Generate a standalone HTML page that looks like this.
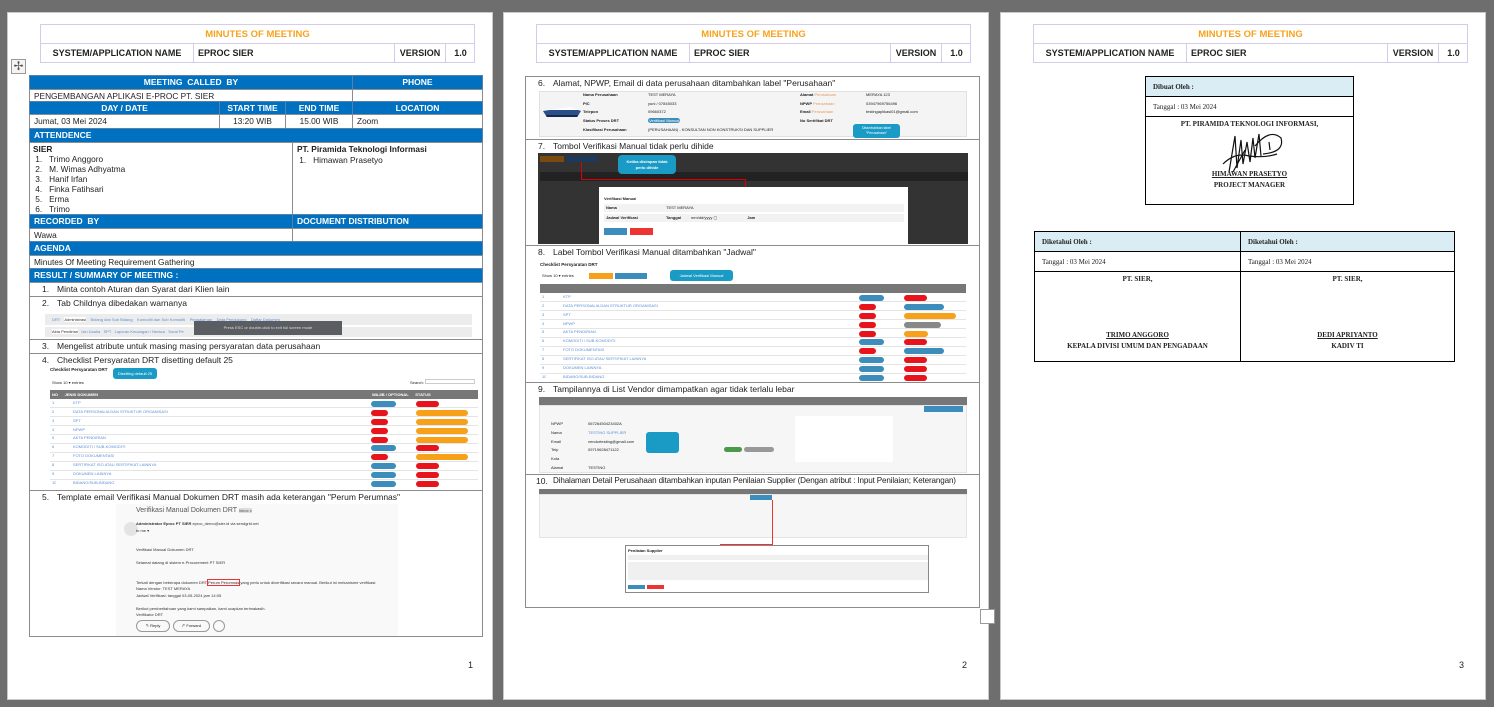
<!DOCTYPE html>
<html><head><meta charset="utf-8">
<style>
*{margin:0;padding:0;box-sizing:border-box}
body{width:1494px;height:707px;background:#6e6e6e;position:relative;overflow:hidden;font-family:"Liberation Sans",sans-serif;color:#222}
.pg{position:absolute;top:12px;width:486px;height:688px;background:#fff;border:1px solid #c8c8c8}
.a{position:absolute}
.hd{position:absolute;left:32px;top:11px;width:435px;height:39px;border:1px solid #d4cdea}
.hd .t{position:absolute;left:0;top:0;width:100%;height:19px;border-bottom:1px solid #d4cdea;text-align:center;color:#f7a21b;font-weight:bold;font-size:9.5px;line-height:19px}
.hd .c{position:absolute;top:19px;height:19px;line-height:19px;font-size:9px;font-weight:bold;border-right:1px solid #d4cdea}
.blue{position:absolute;background:#0070c0;color:#fff;font-weight:bold;font-size:8.5px;line-height:13px;border:1px solid #5a7fa8}
.cell{position:absolute;font-size:8.3px;line-height:12px;border:1px solid #8c8c8c;background:#fff}
.itm{position:absolute;border:1px solid #8c8c8c;font-size:8.5px;background:#fff}
.itm .n{position:absolute;left:12px;top:1px}
.itm .tx{position:absolute;left:27px;top:1px;white-space:nowrap}
.tiny{font-size:4px;line-height:9px;white-space:nowrap;overflow:hidden}
.bd{position:absolute;height:6px;border-radius:3px}
.r{background:#e8141b}.o{background:#f7a11a}.b{background:#3c8dbc}.g{background:#888}
.pn{position:absolute;font-size:9px}
table.s{border-collapse:collapse;position:absolute}
table.s td{border:1px solid #000;font-family:"Liberation Serif",serif;font-size:7px;padding:0 7px;height:20px}
.sh{background:#daedf4;font-weight:bold}
.cen{text-align:center;font-weight:bold}
</style></head><body>

<!-- PAGE 1 -->
<div class="pg" style="left:7px">
 <div class="hd"><div class="t">MINUTES OF MEETING</div>
  <div class="c" style="left:0;width:153px;text-align:center">SYSTEM/APPLICATION NAME</div>
  <div class="c" style="left:153px;width:201px;padding-left:4px">EPROC SIER</div>
  <div class="c" style="left:354px;width:51px;text-align:center">VERSION</div>
  <div class="c" style="left:405px;width:29px;text-align:center;border:none">1.0</div></div>
 <div class="a" style="left:3px;top:46px;width:15px;height:15px;border:1px solid #999;background:#f4f4f4;font-size:12px;line-height:12px;text-align:center;color:#555">✢</div>

 <div class="blue" style="left:21px;top:62px;width:324px;height:15px;text-align:center">MEETING&nbsp; CALLED&nbsp; BY</div>
 <div class="blue" style="left:344px;top:62px;width:131px;height:15px;text-align:center">PHONE</div>
 <div class="cell" style="left:21px;top:76px;width:324px;height:13px;padding-left:4px">PENGEMBANGAN APLIKASI E-PROC PT. SIER</div>
 <div class="cell" style="left:344px;top:76px;width:131px;height:13px"></div>
 <div class="blue" style="left:21px;top:88px;width:191px;height:14px;text-align:center">DAY / DATE</div>
 <div class="blue" style="left:211px;top:88px;width:67px;height:14px;text-align:center">START TIME</div>
 <div class="blue" style="left:277px;top:88px;width:68px;height:14px;text-align:center">END TIME</div>
 <div class="blue" style="left:344px;top:88px;width:131px;height:14px;text-align:center">LOCATION</div>
 <div class="cell" style="left:21px;top:101px;width:191px;height:15px;padding-left:4px;line-height:13px">Jumat, 03 Mei 2024</div>
 <div class="cell" style="left:211px;top:101px;width:67px;height:15px;text-align:center;line-height:13px">13:20 WIB</div>
 <div class="cell" style="left:277px;top:101px;width:68px;height:15px;text-align:center;line-height:13px">15.00 WIB</div>
 <div class="cell" style="left:344px;top:101px;width:131px;height:15px;padding-left:4px;line-height:13px">Zoom</div>
 <div class="blue" style="left:21px;top:115px;width:454px;height:15px;padding-left:4px">ATTENDENCE</div>
 <div class="cell" style="left:21px;top:129px;width:264px;height:73px;padding:1px 3px;line-height:10px"><b>SIER</b><br>&nbsp;1.&nbsp;&nbsp; Trimo Anggoro<br>&nbsp;2.&nbsp;&nbsp; M. Wimas Adhyatma<br>&nbsp;3.&nbsp;&nbsp; Hanif Irfan<br>&nbsp;4.&nbsp;&nbsp; Finka Fatihsari<br>&nbsp;5.&nbsp;&nbsp; Erma<br>&nbsp;6.&nbsp;&nbsp; Trimo</div>
 <div class="cell" style="left:284px;top:129px;width:191px;height:73px;padding:1px 4px;line-height:11px"><b>PT. Piramida Teknologi Informasi</b><br>&nbsp;1.&nbsp;&nbsp; Himawan Prasetyo</div>
 <div class="blue" style="left:21px;top:201px;width:264px;height:15px;padding-left:4px">RECORDED&nbsp; BY</div>
 <div class="blue" style="left:284px;top:201px;width:191px;height:15px;padding-left:4px">DOCUMENT DISTRIBUTION</div>
 <div class="cell" style="left:21px;top:215px;width:264px;height:14px;padding-left:4px">Wawa</div>
 <div class="cell" style="left:284px;top:215px;width:191px;height:14px"></div>
 <div class="blue" style="left:21px;top:228px;width:454px;height:15px;padding-left:4px">AGENDA</div>
 <div class="cell" style="left:21px;top:242px;width:454px;height:14px;padding-left:4px">Minutes Of Meeting Requirement Gathering</div>
 <div class="blue" style="left:21px;top:255px;width:454px;height:15px;padding-left:4px">RESULT / SUMMARY OF MEETING :</div>
 <div class="itm" style="left:21px;top:269px;width:454px;height:15px"><span class="n">1.</span><span class="tx">Minta contoh Aturan dan Syarat dari Klien lain</span></div>
 <div class="itm" style="left:21px;top:283px;width:454px;height:44px"><span class="n">2.</span><span class="tx">Tab Childnya dibedakan warnanya</span>
  <div class="a" style="left:15px;top:17px;width:427px;height:11px;background:#ececec"></div>
  <div class="a tiny" style="left:22px;top:18px;color:#5b8fd6">DRT &nbsp;&nbsp; <span style="color:#333;background:#fff">Administrasi</span> &nbsp;&nbsp; Bidang dan Sub Bidang &nbsp;&nbsp; Komoditi dan Sub Komoditi &nbsp;&nbsp; Pengalaman &nbsp;&nbsp; Data Pendukung &nbsp;&nbsp; Daftar Dokumen</div>
  <div class="a" style="left:15px;top:30px;width:427px;height:10px;background:#ececec"></div>
  <div class="a tiny" style="left:22px;top:30px;color:#5b8fd6"><span style="color:#333;background:#fff">Akta Pendirian</span> &nbsp; Izin Usaha &nbsp; SPT &nbsp; Laporan Keuangan / Neraca &nbsp; Surat Pe</div>
  <div class="a tiny" style="left:164px;top:24px;width:148px;height:14px;background:#5a5d62;color:#ddd;text-align:center;line-height:14px">Press ESC or double-click to exit full screen mode</div>
 </div>
 <div class="itm" style="left:21px;top:326px;width:454px;height:15px"><span class="n">3.</span><span class="tx">Mengelist atribute untuk masing masing persyaratan data perusahaan</span></div>
 <div class="itm" style="left:21px;top:340px;width:454px;height:138px"><span class="n">4.</span><span class="tx">Checklist Persyaratan DRT disetting default 25</span>
  <div class="a" style="left:20px;top:13px;font-size:4.5px;font-weight:bold">Checklist Persyaratan DRT</div>
  <div class="a" style="left:83px;top:14px;width:44px;height:11px;background:#1a9bc6;border-radius:3px;color:#fff;font-size:4px;line-height:11px;text-align:center">Disetting default 25</div>
  <div class="a tiny" style="left:22px;top:24px">Show 10 ▾ entries</div>
  <div class="a tiny" style="left:380px;top:24px">Search: <span style="display:inline-block;width:50px;height:5px;border:1px solid #ccc"></span></div>
  <div class="a" style="left:20px;top:36px;width:428px;height:9px;background:#777"></div>
  <div class="a tiny" style="left:22px;top:36px;color:#fff;font-weight:bold">NO &nbsp;&nbsp;&nbsp;&nbsp; JENIS DOKUMEN</div>
  <div class="a tiny" style="left:342px;top:36px;color:#fff;font-weight:bold">WAJIB / OPTIONAL &nbsp;&nbsp;&nbsp;&nbsp; STATUS</div>
  <div class="a" style="left:20px;top:45px;width:428px;height:89px;background:repeating-linear-gradient(#fff 0 8px,#e4e4e4 8px 9px)"></div>
  <div class="a tiny" style="left:22px;top:45px;line-height:8.85px;color:#5b8fd6">1<br>2<br>3<br>4<br>5<br>6<br>7<br>8<br>9<br>10</div>
  <div class="a tiny" style="left:43px;top:45px;line-height:8.85px;color:#5b8fd6">KTP<br>DATA PERSONALIA DAN STRUKTUR ORGANISASI<br>SPT<br>NPWP<br>AKTA PENDIRIAN<br>KOMODITI / SUB-KOMODITI<br>FOTO DOKUMENTASI<br>SERTIFIKAT ISO ATAU SERTIFIKAT LAINNYA<br>DOKUMEN LAINNYA<br>BIDANG/SUB-BIDANG</div>
  <div class="bd b" style="left:341px;top:47px;width:25px"></div><div class="bd r" style="left:386px;top:47px;width:23px"></div>
  <div class="bd r" style="left:341px;top:56px;width:17px"></div><div class="bd o" style="left:386px;top:56px;width:52px"></div>
  <div class="bd r" style="left:341px;top:65px;width:17px"></div><div class="bd o" style="left:386px;top:65px;width:52px"></div>
  <div class="bd r" style="left:341px;top:74px;width:17px"></div><div class="bd o" style="left:386px;top:74px;width:52px"></div>
  <div class="bd r" style="left:341px;top:83px;width:17px"></div><div class="bd o" style="left:386px;top:83px;width:52px"></div>
  <div class="bd b" style="left:341px;top:91px;width:25px"></div><div class="bd r" style="left:386px;top:91px;width:23px"></div>
  <div class="bd r" style="left:341px;top:100px;width:17px"></div><div class="bd o" style="left:386px;top:100px;width:52px"></div>
  <div class="bd b" style="left:341px;top:109px;width:25px"></div><div class="bd r" style="left:386px;top:109px;width:23px"></div>
  <div class="bd b" style="left:341px;top:118px;width:25px"></div><div class="bd r" style="left:386px;top:118px;width:23px"></div>
  <div class="bd b" style="left:341px;top:127px;width:25px"></div><div class="bd r" style="left:386px;top:127px;width:23px"></div>
 </div>
 <div class="itm" style="left:21px;top:477px;width:454px;height:147px"><span class="n">5.</span><span class="tx">Template email Verifikasi Manual Dokumen DRT masih ada keterangan "Perum Perumnas"</span>
  <div class="a" style="left:86px;top:13px;width:282px;height:132px;background:#f9f9f9"></div>
  <div class="a" style="left:106px;top:16px;font-size:7px;color:#555">Verifikasi Manual Dokumen DRT <span style="font-size:4px;background:#ddd">Inbox x</span></div>
  <div class="a" style="left:94px;top:31px;width:14px;height:14px;border-radius:50%;background:#e4e4e4"></div>
  <div class="a tiny" style="left:106px;top:30px;line-height:6.5px;color:#333"><b>Administrator Eproc PT SIER</b> eproc_demo@sier.id via sendgrid.net<br>to me ▾<br><br><br>Verifikasi Manual Dokumen DRT<br><br>Selamat datang di sistem e-Procurement PT SIER<br><br><br>Terkait dengan beberapa dokumen DRT <span style="outline:1px solid #e33">Perum Perumnas</span> yang perlu untuk diverifikasi secara manual. Berikut ini mekanisme verifikasi:<br>Nama Vendor: TEST MERAYA<br>Jadwal Verifikasi: tanggal 03-05-2024 jam 14:05<br><br>Berikut pemberitahuan yang kami sampaikan, kami ucapkan terimakasih.<br>Verifikator DRT</div>
  <div class="a tiny" style="left:106px;top:129px;width:34px;height:12px;border:1px solid #999;border-radius:6px;line-height:10px;text-align:center">↰ Reply</div>
  <div class="a tiny" style="left:143px;top:129px;width:37px;height:12px;border:1px solid #999;border-radius:6px;line-height:10px;text-align:center">↱ Forward</div>
  <div class="a" style="left:183px;top:129px;width:12px;height:12px;border:1px solid #999;border-radius:50%"></div>
 </div>
 <div class="pn" style="left:460px;top:647px">1</div>
</div>

<!-- PAGE 2 -->
<div class="pg" style="left:503px">
 <div class="hd"><div class="t">MINUTES OF MEETING</div>
  <div class="c" style="left:0;width:153px;text-align:center">SYSTEM/APPLICATION NAME</div>
  <div class="c" style="left:153px;width:201px;padding-left:4px">EPROC SIER</div>
  <div class="c" style="left:354px;width:51px;text-align:center">VERSION</div>
  <div class="c" style="left:405px;width:29px;text-align:center;border:none">1.0</div></div>
 <div class="itm" style="left:21px;top:63px;width:455px;height:64px"><span class="n">6.</span><span class="tx">Alamat, NPWP, Email di data perusahaan ditambahkan label "Perusahaan"</span>
  <div class="a" style="left:13px;top:14px;width:428px;height:46px;background:#f4f4f4;border:1px solid #e0e0e0"></div>
  <div class="a" style="left:17px;top:30px;width:38px;height:10px;background:linear-gradient(#fff 0 30%,#2a4f8a 30% 80%,#152a4a 80%);clip-path:polygon(0 40%,70% 0,100% 40%,90% 100%,10% 100%)"></div>
  <div class="a tiny" style="left:57px;top:14px;line-height:8.7px;font-weight:bold">Nama Perusahaan<br>PIC<br>Telepon<br>Status Proses DRT<br>Klasifikasi Perusahaan</div>
  <div class="a tiny" style="left:122px;top:14px;line-height:8.7px">TEST MERAYA<br>yuni / 07845033<br>09660372<br><span style="background:#3c8dbc;color:#fff;border-radius:3px">&nbsp;Verifikasi Manual&nbsp;</span><br>(PERUSAHAAN) - KONSULTAN NON KONSTRUKSI DAN SUPPLIER</div>
  <div class="a tiny" style="left:274px;top:14px;line-height:8.7px;font-weight:bold">Alamat <span style="color:#e89a5a;font-weight:normal">Perusahaan</span><br>NPWP <span style="color:#e89a5a;font-weight:normal">Perusahaan</span><br>Email <span style="color:#e89a5a;font-weight:normal">Perusahaan</span><br>No Sertifikat DRT</div>
  <div class="a tiny" style="left:340px;top:14px;line-height:8.7px">MERAYA 123<br>03947969756496<br>testingaplikasi01@gmail.com</div>
  <div class="a" style="left:327px;top:47px;width:47px;height:14px;background:#1a9bc6;border-radius:3px;color:#fff;font-size:3.5px;text-align:center;line-height:5px;padding-top:2px">Ditambahkan label<br>"Perusahaan"</div>
 </div>
 <div class="itm" style="left:21px;top:126px;width:455px;height:107px"><span class="n">7.</span><span class="tx">Tombol Verifikasi Manual tidak perlu dihide</span>
  <div class="a" style="left:12px;top:13px;width:430px;height:91px;background:#333"></div>
  <div class="a" style="left:14px;top:32px;width:428px;height:9px;background:#222"></div>
  <div class="a" style="left:14px;top:16px;width:24px;height:6px;background:#7a4a10"></div>
  <div class="a" style="left:40px;top:16px;width:32px;height:6px;background:#1e3a5a"></div>
  <div class="a" style="left:92px;top:15px;width:58px;height:19px;background:#1a9bc6;border-radius:4px;color:#fff;font-size:4px;font-weight:bold;text-align:center;line-height:6px;padding-top:4px">Ketika disimpan tidak<br>perlu dihide</div>
  <div class="a" style="left:55px;top:22px;width:1px;height:17px;background:#d00"></div>
  <div class="a" style="left:55px;top:39px;width:165px;height:1px;background:#d00"></div>
  <div class="a" style="left:219px;top:39px;width:1px;height:10px;background:#d00"></div>
  <div class="a" style="left:73px;top:47px;width:309px;height:57px;background:#fff"></div>
  <div class="a tiny" style="left:78px;top:54px;font-weight:bold">Verifikasi Manual</div>
  <div class="a" style="left:78px;top:64px;width:300px;height:8px;background:#f2f2f2"></div>
  <div class="a" style="left:78px;top:74px;width:300px;height:8px;background:#f2f2f2"></div>
  <div class="a tiny" style="left:80px;top:63px;line-height:10px;font-weight:bold">Nama<br>Jadwal Verifikasi</div>
  <div class="a tiny" style="left:140px;top:63px;line-height:10px">TEST MERAYA<br><b>Tanggal</b> &nbsp;&nbsp;&nbsp;&nbsp;&nbsp;&nbsp;&nbsp; mm/dd/yyyy ▢ &nbsp;&nbsp;&nbsp;&nbsp;&nbsp;&nbsp;&nbsp;&nbsp;&nbsp;&nbsp;&nbsp;&nbsp;&nbsp;&nbsp;&nbsp;&nbsp;&nbsp;&nbsp;&nbsp;&nbsp;&nbsp;&nbsp;&nbsp;&nbsp;&nbsp; <b>Jam</b></div>
  <div class="a" style="left:78px;top:88px;width:23px;height:7px;background:#3c8dbc"></div>
  <div class="a" style="left:104px;top:88px;width:23px;height:7px;background:#e33"></div>
 </div>
 <div class="itm" style="left:21px;top:232px;width:455px;height:138px"><span class="n">8.</span><span class="tx">Label Tombol Verifikasi Manual ditambahkan "Jadwal"</span>
  <div class="a" style="left:14px;top:16px;font-size:4.5px;font-weight:bold">Checklist Persyaratan DRT</div>
  <div class="a tiny" style="left:16px;top:25px">Show 10 ▾ entries</div>
  <div class="a" style="left:63px;top:27px;width:24px;height:6px;background:#f7a11a"></div>
  <div class="a" style="left:89px;top:27px;width:32px;height:6px;background:#3c8dbc"></div>
  <div class="a" style="left:144px;top:24px;width:63px;height:11px;background:#1a9bc6;border-radius:3px;color:#fff;font-size:4px;text-align:center;line-height:11px">Jadwal Verifikasi Manual</div>
  <div class="a" style="left:14px;top:38px;width:426px;height:9px;background:#777"></div>
  <div class="a" style="left:14px;top:47px;width:426px;height:89px;background:repeating-linear-gradient(#fff 0 8px,#e4e4e4 8px 9px)"></div>
  <div class="a tiny" style="left:16px;top:47px;line-height:8.85px;color:#5b8fd6">1<br>2<br>3<br>4<br>5<br>6<br>7<br>8<br>9<br>10</div>
  <div class="a tiny" style="left:37px;top:47px;line-height:8.85px;color:#5b8fd6">KTP<br>DATA PERSONALIA DAN STRUKTUR ORGANISASI<br>SPT<br>NPWP<br>AKTA PENDIRIAN<br>KOMODITI / SUB-KOMODITI<br>FOTO DOKUMENTASI<br>SERTIFIKAT ISO ATAU SERTIFIKAT LAINNYA<br>DOKUMEN LAINNYA<br>BIDANG/SUB-BIDANG</div>
  <div class="bd b" style="left:333px;top:49px;width:25px"></div><div class="bd r" style="left:378px;top:49px;width:23px"></div>
  <div class="bd r" style="left:333px;top:58px;width:17px"></div><div class="bd b" style="left:378px;top:58px;width:40px"></div>
  <div class="bd r" style="left:333px;top:67px;width:17px"></div><div class="bd o" style="left:378px;top:67px;width:52px"></div>
  <div class="bd r" style="left:333px;top:76px;width:17px"></div><div class="bd g" style="left:378px;top:76px;width:37px"></div>
  <div class="bd r" style="left:333px;top:85px;width:17px"></div><div class="bd o" style="left:378px;top:85px;width:24px"></div>
  <div class="bd b" style="left:333px;top:93px;width:25px"></div><div class="bd r" style="left:378px;top:93px;width:23px"></div>
  <div class="bd r" style="left:333px;top:102px;width:17px"></div><div class="bd b" style="left:378px;top:102px;width:40px"></div>
  <div class="bd b" style="left:333px;top:111px;width:25px"></div><div class="bd r" style="left:378px;top:111px;width:23px"></div>
  <div class="bd b" style="left:333px;top:120px;width:25px"></div><div class="bd r" style="left:378px;top:120px;width:23px"></div>
  <div class="bd b" style="left:333px;top:129px;width:25px"></div><div class="bd r" style="left:378px;top:129px;width:23px"></div>
 </div>
 <div class="itm" style="left:21px;top:369px;width:455px;height:93px"><span class="n">9.</span><span class="tx">Tampilannya di List Vendor dimampatkan agar tidak terlalu lebar</span>
  <div class="a" style="left:13px;top:14px;width:428px;height:8px;background:#777"></div>
  <div class="a" style="left:13px;top:22px;width:428px;height:68px;background:#f6f6f6;border:1px solid #e4e4e4"></div>
  <div class="a tiny" style="left:25px;top:37px;line-height:8.8px">NPWP<br>Nama<br>Email<br>Telp<br>Kota<br>Alamat</div>
  <div class="a tiny" style="left:62px;top:37px;line-height:8.8px">06726450423402A<br><span style="color:#5b8fd6">TESTING SUPPLIER</span><br>vendortesting@gmail.com<br>09719628471122<br><br>TESTING</div>
  <div class="a" style="left:120px;top:49px;width:33px;height:21px;background:#1a9bc6;border-radius:3px"></div>
  <div class="a" style="left:269px;top:33px;width:98px;height:46px;background:#fff"></div>
  <div class="a" style="left:398px;top:23px;width:39px;height:6px;background:#3c8dbc"></div>
  <div class="a" style="left:198px;top:64px;width:18px;height:5px;background:#4a9a4a;border-radius:3px"></div>
  <div class="a" style="left:218px;top:64px;width:30px;height:5px;background:#999;border-radius:3px"></div>
 </div>
 <div class="itm" style="left:21px;top:461px;width:455px;height:134px"><span class="n" style="left:10px">10.</span><span class="tx" style="left:27px;font-size:8.1px;letter-spacing:-0.15px">Dihalaman Detail Perusahaan ditambahkan inputan Penilaian Supplier (Dengan atribut : Input Penilaian; Keterangan)</span>
  <div class="a" style="left:13px;top:14px;width:428px;height:5px;background:#777"></div>
  <div class="a" style="left:13px;top:19px;width:428px;height:44px;background:#f6f6f6;border:1px solid #e4e4e4"></div>
  <div class="a" style="left:224px;top:20px;width:22px;height:5px;background:#3c8dbc"></div>
  <div class="a" style="left:246px;top:25px;width:1px;height:44px;background:#e33"></div>
  <div class="a" style="left:194px;top:69px;width:53px;height:1px;background:#e33"></div>
  <div class="a" style="left:194px;top:69px;width:1px;height:10px;background:#e33"></div>
  <div class="a" style="left:99px;top:70px;width:304px;height:48px;background:#fff;border:1px solid #888"></div>
  <div class="a tiny" style="left:102px;top:71px;font-weight:bold">Penilaian Supplier</div>
  <div class="a" style="left:102px;top:80px;width:300px;height:5px;background:#f0f0f0"></div>
  <div class="a" style="left:102px;top:87px;width:300px;height:18px;background:#f0f0f0"></div>
  <div class="a" style="left:102px;top:110px;width:17px;height:4px;background:#3c8dbc"></div>
  <div class="a" style="left:121px;top:110px;width:17px;height:4px;background:#e33"></div>
 </div>
 <div class="pn" style="left:458px;top:647px">2</div>
</div>
<div class="a" style="left:980px;top:609px;width:15px;height:15px;background:#fff;border:1px solid #999"></div>

<!-- PAGE 3 -->
<div class="pg" style="left:1000px">
 <div class="hd"><div class="t">MINUTES OF MEETING</div>
  <div class="c" style="left:0;width:153px;text-align:center">SYSTEM/APPLICATION NAME</div>
  <div class="c" style="left:153px;width:201px;padding-left:4px">EPROC SIER</div>
  <div class="c" style="left:354px;width:51px;text-align:center">VERSION</div>
  <div class="c" style="left:405px;width:29px;text-align:center;border:none">1.0</div></div>
 <table class="s" style="left:144px;top:63px;width:209px">
  <tr><td class="sh">Dibuat Oleh :</td></tr>
  <tr><td>Tanggal : 03 Mei 2024</td></tr>
  <tr><td class="cen" style="height:88px;vertical-align:top;padding-top:3px">PT. PIRAMIDA TEKNOLOGI INFORMASI,<br>
   <svg width="70" height="48" viewBox="0 0 70 48" style="display:block;margin:0 auto"><path d="M14 44 L20 8 L22 40 L26 12 L28 36 L32 14 L35 34 L38 10 L40 30 L44 6 L46 28 M8 36 Q20 24 34 28 Q50 30 62 26 M40 18 Q55 0 66 10 Q70 24 48 26 M54 14 L55 22 M18 44 L30 22" fill="none" stroke="#111" stroke-width="1.2"/></svg>
   <u style="display:block;margin-top:-6px">HIMAWAN PRASETYO</u><span style="display:block;margin-top:3px">PROJECT MANAGER</span></td></tr>
 </table>
 <table class="s" style="left:33px;top:218px;width:421px">
  <tr><td class="sh" style="width:206px">Diketahui Oleh :</td><td class="sh">Diketahui Oleh :</td></tr>
  <tr><td>Tanggal : 03 Mei 2024</td><td>Tanggal : 03 Mei 2024</td></tr>
  <tr><td class="cen" style="height:90px;vertical-align:top;padding-top:3px">PT. SIER,<br><br><br><br><br><br><br><u>TRIMO ANGGORO</u><br><span style="display:block;margin-top:3px">KEPALA DIVISI UMUM DAN PENGADAAN</span></td>
  <td class="cen" style="vertical-align:top;padding-top:3px">PT. SIER,<br><br><br><br><br><br><br><u>DEDI APRIYANTO</u><br><span style="display:block;margin-top:3px">KADIV TI</span></td></tr>
 </table>
 <div class="pn" style="left:458px;top:647px">3</div>
</div>
</body></html>
